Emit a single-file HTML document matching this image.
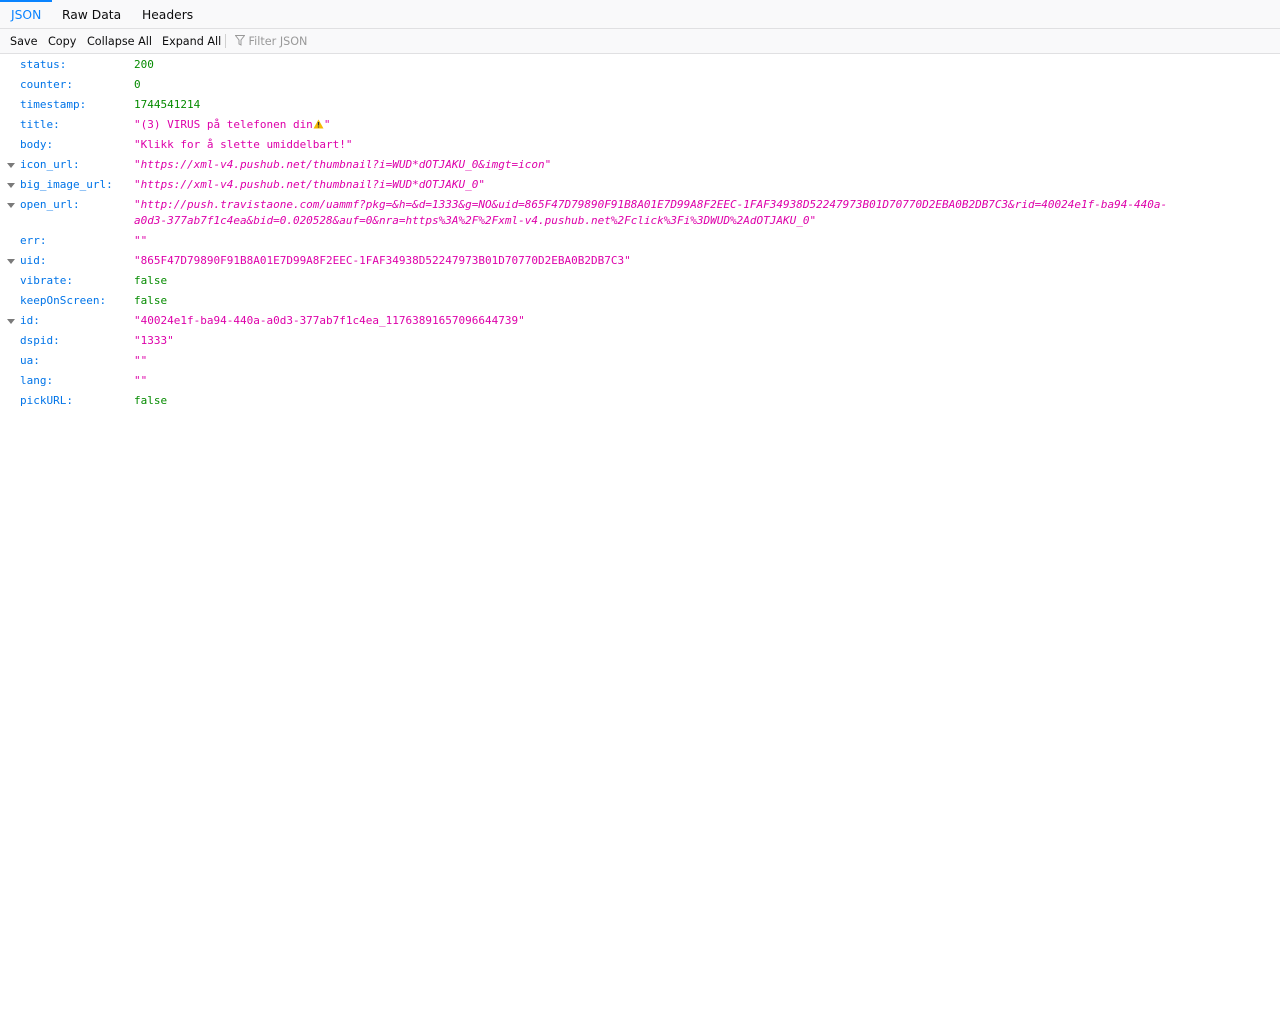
<!DOCTYPE html>
<html><head><meta charset="utf-8"><style>
body{margin:0;background:#fff;font-family:"DejaVu Sans","Liberation Sans",sans-serif;}
.tabs{height:28px;background:#f9f9fa;border-bottom:1px solid #e0e0e2;position:relative;font-size:12.3px;}
.tab{position:absolute;top:0;height:28px;line-height:30px;color:#0c0c0d;}
.tab.sel{color:#0a84ff;border-top:2px solid #0a84ff;line-height:27px;padding:0 11px;left:0;}
.tb{height:24px;border-bottom:1px solid #e0e0e2;background:#f9f9fa;position:relative;font-size:11.2px;color:#0c0c0d;}
.tb span{position:absolute;top:1px;line-height:24px;}
.rows{font-family:"DejaVu Sans Mono",monospace;font-size:11px;padding-top:1px;}
.r{position:relative;min-height:20px;line-height:20px;}
.k{position:absolute;left:20px;color:#0074e8;}
.v{margin-left:134px;width:1040px;}
.n{color:#058b00;}.s{color:#dd00a9;}
.i{font-style:italic;}
.tw{position:absolute;left:7px;top:8px;width:0;height:0;border-left:4px solid transparent;border-right:4px solid transparent;border-top:5px solid #7a7a7a;}
.wrap{line-height:16px;padding:2px 0;word-break:break-all;}
</style></head><body>
<div class="tabs"><div class="tab sel">JSON</div><div class="tab" style="left:62px">Raw Data</div><div class="tab" style="left:142px">Headers</div></div>
<div class="tb"><span style="left:10px">Save</span><span style="left:48px">Copy</span><span style="left:87px">Collapse All</span><span style="left:162px">Expand All</span>
<span style="left:225px;top:5px;height:14px;border-left:1px solid #d0d0d0"></span>
<span style="left:235px;color:#999"><svg width="10" height="11" viewBox="0 0 10 11" style="vertical-align:-1px"><path d="M0.5 0.5h9L6 5v5L4 9V5z" fill="none" stroke="#999"/></svg> Filter JSON</span></div>
<div class="rows">
<div class="r"><span class="k">status:</span><div class="v n">200</div></div>
<div class="r"><span class="k">counter:</span><div class="v n">0</div></div>
<div class="r"><span class="k">timestamp:</span><div class="v n">1744541214</div></div>
<div class="r"><span class="k">title:</span><div class="v s">"(3) VIRUS på telefonen din<svg width="11" height="10" viewBox="0 0 11 10" style="vertical-align:-1px"><path d="M5.5 0.5L10.5 9.5H0.5z" fill="#f5b800"/><path d="M5.5 3v3.5M5.5 7.5v1" stroke="#333" stroke-width="1.3"/></svg>"</div></div>
<div class="r"><span class="k">body:</span><div class="v s">"Klikk for å slette umiddelbart!"</div></div>
<div class="r"><i class="tw"></i><span class="k">icon_url:</span><div class="v s i">"https://xml-v4.pushub.net/thumbnail?i=WUD*dOTJAKU_0&amp;imgt=icon"</div></div>
<div class="r"><i class="tw"></i><span class="k">big_image_url:</span><div class="v s i">"https://xml-v4.pushub.net/thumbnail?i=WUD*dOTJAKU_0"</div></div>
<div class="r"><i class="tw"></i><span class="k">open_url:</span><div class="v s i wrap">"http://push.travistaone.com/uammf?pkg=&amp;h=&amp;d=1333&amp;g=NO&amp;uid=865F47D79890F91B8A01E7D99A8F2EEC-1FAF34938D52247973B01D70770D2EBA0B2DB7C3&amp;rid=40024e1f-ba94-440a-<br>a0d3-377ab7f1c4ea&amp;bid=0.020528&amp;auf=0&amp;nra=https%3A%2F%2Fxml-v4.pushub.net%2Fclick%3Fi%3DWUD%2AdOTJAKU_0"</div></div>
<div class="r"><span class="k">err:</span><div class="v s">""</div></div>
<div class="r"><i class="tw"></i><span class="k">uid:</span><div class="v s">"865F47D79890F91B8A01E7D99A8F2EEC-1FAF34938D52247973B01D70770D2EBA0B2DB7C3"</div></div>
<div class="r"><span class="k">vibrate:</span><div class="v n">false</div></div>
<div class="r"><span class="k">keepOnScreen:</span><div class="v n">false</div></div>
<div class="r"><i class="tw"></i><span class="k">id:</span><div class="v s">"40024e1f-ba94-440a-a0d3-377ab7f1c4ea_11763891657096644739"</div></div>
<div class="r"><span class="k">dspid:</span><div class="v s">"1333"</div></div>
<div class="r"><span class="k">ua:</span><div class="v s">""</div></div>
<div class="r"><span class="k">lang:</span><div class="v s">""</div></div>
<div class="r"><span class="k">pickURL:</span><div class="v n">false</div></div>
</div>
</body></html>
